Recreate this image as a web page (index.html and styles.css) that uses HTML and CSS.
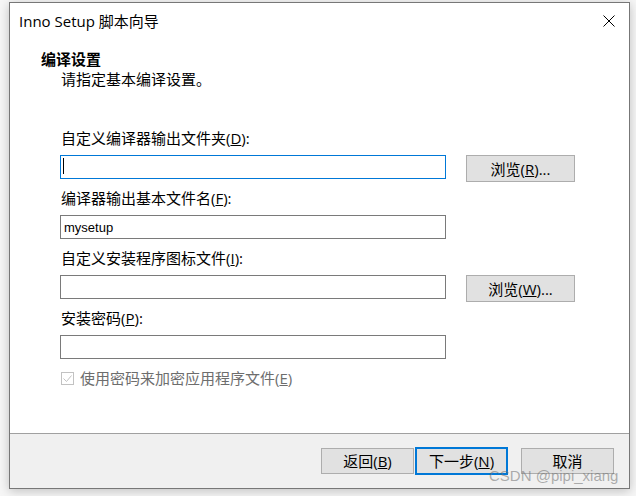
FILE: index.html
```html
<!DOCTYPE html>
<html lang="zh-CN">
<head>
    <meta charset="UTF-8">
    <title>Inno Setup 脚本向导</title>
    <link rel="stylesheet" href="styles.css">
</head>
<body>
    <div class="window">
        <div class="title-bar">
            <span class="title">Inno Setup 脚本向导</span>
            <svg class="close-icon" width="12" height="12" viewBox="0 0 12 12">
                <path d="M0.5 0.5L11.5 11.5M11.5 0.5L0.5 11.5" stroke="#000" stroke-width="1" fill="none"/>
            </svg>
        </div>

        <div class="page-header">
            <div class="page-title">编译设置</div>
            <div class="page-desc">请指定基本编译设置。</div>
        </div>

        <div class="page-body">
            <div class="field">
                <label class="field-label" for="out-dir">自定义编译器输出文件夹(<u>D</u>):</label>
                <div class="field-row">
                    <span class="input-wrap">
                        <input class="text-box active" type="text" id="out-dir">
                        <span class="caret"></span>
                    </span>
                    <button class="btn browse">浏览(<u>R</u>)...</button>
                </div>
            </div>

            <div class="field">
                <label class="field-label" for="out-name">编译器输出基本文件名(<u>F</u>):</label>
                <div class="field-row">
                    <span class="input-wrap">
                        <input class="text-box" type="text" id="out-name" value="mysetup">
                    </span>
                </div>
            </div>

            <div class="field">
                <label class="field-label" for="icon-file">自定义安装程序图标文件(<u>I</u>):</label>
                <div class="field-row">
                    <span class="input-wrap">
                        <input class="text-box" type="text" id="icon-file">
                    </span>
                    <button class="btn browse">浏览(<u>W</u>)...</button>
                </div>
            </div>

            <div class="field">
                <label class="field-label" for="password">安装密码(<u>P</u>):</label>
                <div class="field-row">
                    <span class="input-wrap">
                        <input class="text-box" type="text" id="password">
                    </span>
                </div>
            </div>

            <div class="check-row">
                <span class="check-box">
                    <svg width="11" height="11" viewBox="0 0 11 11">
                        <path d="M1.5 5.5L4.5 8.5L9.5 2.5" stroke="#c2c2c2" stroke-width="1" fill="none"/>
                    </svg>
                </span>
                <span class="check-label">使用密码来加密应用程序文件(<u>E</u>)</span>
            </div>
        </div>

        <div class="footer">
            <button class="btn nav">返回(<u>B</u>)</button>
            <button class="btn nav default">下一步(<u>N</u>)</button>
            <button class="btn nav cancel">取消</button>
        </div>
    </div>

    <div class="watermark">CSDN @pipi_xiang</div>
</body>
</html>
```

FILE: styles.css
```css
body {
    margin: 0;
    width: 636px;
    height: 496px;
    overflow: hidden;
    background-color: #f6f6f6;
    font-family: "Open Sans", "Noto Sans CJK SC", sans-serif;
    font-size: 15px;
    color: #000;
}

.window {
    margin: 2px 0 0 9px;
    width: 621px;
    height: 487px;
    box-sizing: border-box;
    border: 1px solid #777;
    background-color: #fff;
    box-shadow: 0 2px 10px rgba(0, 0, 0, 0.22);
    display: flex;
    flex-direction: column;
}

.title-bar {
    height: 36px;
    padding-left: 9px;
    display: flex;
    align-items: center;
    justify-content: space-between;
}

.title {
    line-height: 20px;
}

.close-icon {
    margin-right: 14px;
}

.page-header {
    padding: 10px 0 0 31px;
    line-height: 20px;
}

.page-title {
    font-weight: bold;
}

.page-desc {
    padding-left: 20px;
}

.page-body {
    flex: 1;
    padding: 39px 0 0 50px;
}

.field-label {
    display: block;
    padding-left: 1px;
    line-height: 20px;
    margin-bottom: 7px;
}

.field-row {
    display: flex;
    align-items: flex-start;
    height: 24px;
    margin-bottom: 9px;
}

.input-wrap {
    position: relative;
    display: block;
}

.text-box {
    display: block;
    width: 386px;
    height: 24px;
    box-sizing: border-box;
    margin: 0;
    padding: 0 3px;
    border: 1px solid #7a7a7a;
    border-radius: 0;
    outline: none;
    font-family: "Liberation Sans", Arial, sans-serif;
    font-size: 13px;
    color: #000;
}

.text-box.active {
    border-color: #0078d7;
}

.caret {
    position: absolute;
    left: 3px;
    top: 3px;
    width: 1px;
    height: 16px;
    background-color: #000;
}

.btn {
    box-sizing: border-box;
    margin: 0;
    padding: 0;
    background-color: #e1e1e1;
    border: 1px solid #adadad;
    border-radius: 0;
    font-family: inherit;
    font-size: 15px;
    color: #000;
    line-height: 20px;
}

.browse {
    width: 109px;
    height: 27px;
    margin-left: 20px;
}

.check-row {
    display: flex;
    align-items: center;
    height: 20px;
    margin-top: 1px;
    padding-left: 1px;
}

.check-box {
    width: 13px;
    height: 13px;
    box-sizing: border-box;
    border: 1px solid #c2c2c2;
    display: flex;
    align-items: center;
    justify-content: center;
    margin-right: 6px;
}

.check-label {
    color: #6d6d6d;
    line-height: 20px;
}

.footer {
    height: 55px;
    box-sizing: border-box;
    border-top: 1px solid #a0a0a0;
    background-color: #f0f0f0;
    display: flex;
    align-items: center;
    justify-content: flex-end;
    padding-right: 15px;
}

.nav {
    width: 93px;
    height: 26px;
}

.nav.default {
    height: 28px;
    margin-left: 1px;
    border: 2px solid #0078d7;
}

.nav.cancel {
    margin-left: 13px;
}

.watermark {
    position: absolute;
    left: 489px;
    top: 468px;
    font-family: "Liberation Sans", Arial, sans-serif;
    font-size: 15px;
    line-height: 15px;
    color: rgba(110, 110, 110, 0.55);
}
```
